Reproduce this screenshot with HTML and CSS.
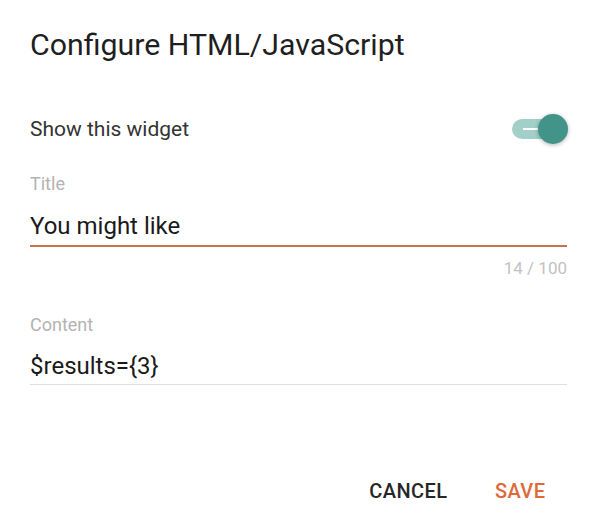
FILE: index.html
```html
<!DOCTYPE html>
<html>
<head>
<meta charset="utf-8">
<link rel="stylesheet" href="styles.css">
</head>
<body>
<div class="dialog">
  <h1 class="heading">Configure HTML/JavaScript</h1>
  <div class="toggle-row">
    <span class="toggle-label">Show this widget</span>
    <span class="switch">
      <span class="track"><span class="track-line"></span></span>
      <span class="thumb"></span>
    </span>
  </div>
  <div class="field field-title">
    <div class="label">Title</div>
    <div class="input focused">You might like</div>
    <div class="counter">14 / 100</div>
  </div>
  <div class="field field-content">
    <div class="label">Content</div>
    <div class="input">$results={3}</div>
  </div>
  <div class="actions">
    <span class="btn btn-cancel">CANCEL</span>
    <span class="btn btn-save">SAVE</span>
  </div>
</div>
</body>
</html>
```

FILE: styles.css
```css
html, body {
  margin: 0;
  padding: 0;
  background: #ffffff;
}
body {
  font-family: Roboto, "Liberation Sans", Arial, sans-serif;
  width: 598px;
  height: 527px;
  overflow: hidden;
}
.dialog {
  padding: 27px 31px 0 30px;
}
.heading {
  margin: 0;
  font-size: 30.3px;
  line-height: 36px;
  font-weight: 400;
  color: #1f1f1f;
}
.toggle-row {
  display: flex;
  align-items: center;
  justify-content: space-between;
  margin-top: 54px;
  height: 24px;
}
.toggle-label {
  font-size: 21px;
  line-height: 24px;
  color: #333333;
}
.switch {
  position: relative;
  width: 56px;
  height: 28px;
  margin-right: -1px;
  display: block;
}
.track {
  position: absolute;
  left: 0;
  top: 4px;
  width: 46px;
  height: 20px;
  border-radius: 10px;
  background: #a2cfc8;
}
.track-line {
  position: absolute;
  left: 11px;
  top: 9px;
  width: 16px;
  height: 2px;
  background: #ffffff;
}
.thumb {
  position: absolute;
  right: 0;
  top: -1px;
  width: 30px;
  height: 30px;
  border-radius: 50%;
  background: #439488;
  box-shadow: 0 1px 4px rgba(0, 0, 0, 0.3);
}
.field-title {
  margin-top: 32px;
}
.label {
  font-size: 18px;
  line-height: 22px;
  color: #b3b3b3;
}
.input {
  font-size: 24px;
  line-height: 28px;
  color: #1a1a1a;
  border-bottom: 1px solid #e0e0e0;
}
.field-title .input {
  margin-top: 17px;
  padding-bottom: 5px;
  border-bottom: 2px solid #c9714b;
}
.counter {
  margin-top: 11px;
  text-align: right;
  font-size: 17px;
  line-height: 20px;
  color: #c2c2c2;
}
.field-content {
  margin-top: 36px;
}
.field-content .input {
  margin-top: 16px;
  padding-bottom: 4px;
}
.actions {
  display: flex;
  justify-content: flex-end;
  gap: 48px;
  margin-top: 94px;
  padding-right: 22px;
}
.btn {
  font-size: 20px;
  line-height: 24px;
  font-weight: 500;
  letter-spacing: 0.4px;
}
.btn-cancel {
  color: #262626;
  margin-right: -0.4px;
}
.btn-save {
  color: #e0693a;
  margin-right: -0.4px;
}
```
